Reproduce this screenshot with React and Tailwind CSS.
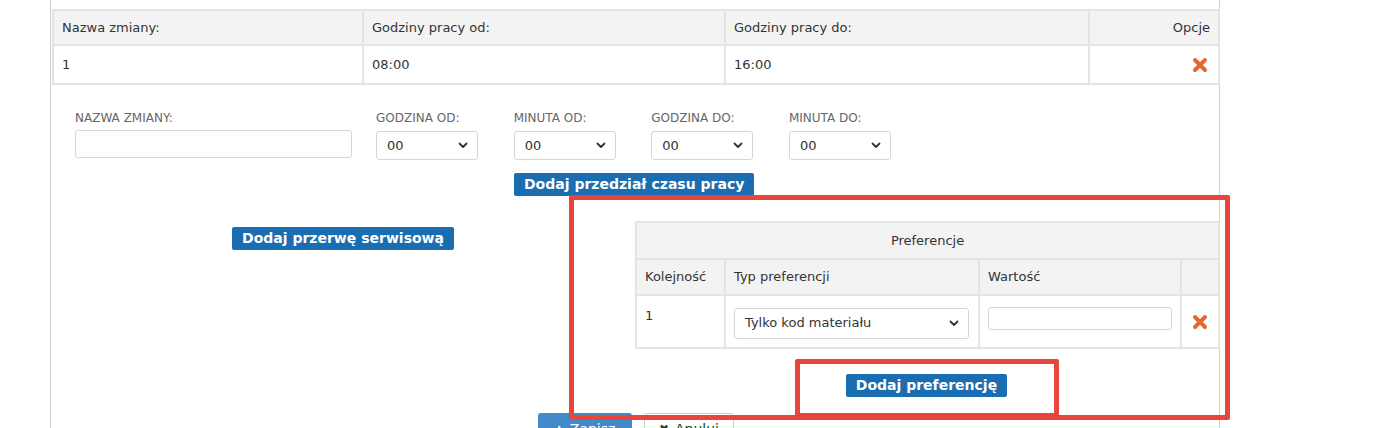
import React from "react";

const font = { fontFamily: '"DejaVu Sans", Verdana, sans-serif' };

function XIcon({ className = "" }) {
  return (
    <svg width="16" height="16" viewBox="0 0 16 16" className={className}>
      <path d="M3 3 L13 13 M13 3 L3 13" stroke="#e3692c" strokeWidth="4" strokeLinecap="round" />
    </svg>
  );
}

function Chevron() {
  return (
    <svg width="10" height="7" viewBox="0 0 10 7">
      <path d="M1.5 1.5 L5 5 L8.5 1.5" stroke="#333" strokeWidth="1.8" fill="none" strokeLinecap="round" strokeLinejoin="round" />
    </svg>
  );
}

function FakeSelect({ value, className = "" }) {
  return (
    <div className={`flex h-[29px] items-center justify-between rounded-[3px] border border-[#d6d6d6] bg-white pl-[10px] pr-[9px] text-[13px] text-[#333] ${className}`}>
      <span>{value}</span>
      <Chevron />
    </div>
  );
}

function BlueBtn({ children, className = "" }) {
  return (
    <button className={`h-[23px] rounded-[2px] bg-[#1a6db1] px-[10px] text-[14px] font-bold leading-[23px] text-white ${className}`}>
      {children}
    </button>
  );
}

export default function App() {
  const th = "border-2 border-[#e4e4e4] bg-[#f3f3f3] px-[8px] text-left font-normal";
  const td = "border-2 border-[#e4e4e4] bg-white px-[8px]";
  const selCols = [
    { label: "GODZINA OD:" },
    { label: "MINUTA OD:" },
    { label: "GODZINA DO:" },
    { label: "MINUTA DO:" },
  ];
  return (
    <div className="relative h-[428px] w-[1389px] overflow-hidden bg-white text-[13px] text-[#333]" style={font}>
      <div className="ml-[50px] h-[428px] w-[1170px] border-x border-[#cfcfcf] bg-white pt-[9px]">
        {/* top table */}
        <table className="ml-[1px] w-[1166px] table-fixed border-collapse">
          <colgroup>
            <col style={{ width: 310 }} />
            <col style={{ width: 362 }} />
            <col style={{ width: 364 }} />
            <col style={{ width: 130 }} />
          </colgroup>
          <thead>
            <tr className="h-[35px]">
              <th className={th}>Nazwa zmiany:</th>
              <th className={th}>Godziny pracy od:</th>
              <th className={th}>Godziny pracy do:</th>
              <th className={`${th} !text-right`}>Opcje</th>
            </tr>
          </thead>
          <tbody>
            <tr className="h-[39px]">
              <td className={td}>1</td>
              <td className={td}>08:00</td>
              <td className={td}>16:00</td>
              <td className={`${td} text-right`}>
                <span className="inline-flex pr-[2px] align-middle"><XIcon /></span>
              </td>
            </tr>
          </tbody>
        </table>

        {/* form row */}
        <div className="mt-[25px] flex pl-[24px]">
          <div className="w-[277px]">
            <div className="h-[16px] text-[12px] leading-[16px] text-[#666]">NAZWA ZMIANY:</div>
            <div className="mt-[4px] h-[28px] rounded-[3px] border border-[#d6d6d6] bg-white" />
          </div>
          <div className="ml-[24px] flex gap-[35.67px]">
            {selCols.map((c) => (
              <div key={c.label} className="w-[102px]">
                <div className="h-[16px] whitespace-nowrap text-[12px] leading-[16px] text-[#666]">{c.label}</div>
                <FakeSelect value="00" className="mt-[5px] !pl-[10px]" />
              </div>
            ))}
          </div>
        </div>

        <div className="mt-[13px] pl-[463px]">
          <BlueBtn>Dodaj przedział czasu pracy</BlueBtn>
        </div>

        {/* lower two-column section */}
        <div className="flex">
          <div className="flex w-[584px] justify-center pt-[31px]">
            <div><BlueBtn>Dodaj przerwę serwisową</BlueBtn></div>
          </div>
          <div className="w-[584px] pt-[25px]">
            <table className="w-[583px] table-fixed border-collapse">
              <colgroup>
                <col style={{ width: 89 }} />
                <col style={{ width: 254 }} />
                <col style={{ width: 202 }} />
                <col style={{ width: 38 }} />
              </colgroup>
              <thead>
                <tr className="h-[37px]">
                  <th colSpan={4} className={`${th} !text-center`}>Preferencje</th>
                </tr>
                <tr className="h-[36px]">
                  <th className={th}>Kolejność</th>
                  <th className={th}>Typ preferencji</th>
                  <th className={th}>Wartość</th>
                  <th className={th}></th>
                </tr>
              </thead>
              <tbody>
                <tr className="h-[53px]">
                  <td className={`${td} align-top pt-[10px]`}>1</td>
                  <td className={td}>
                    <FakeSelect value="Tylko kod materiału" className="h-[31px] w-[235px] !pl-[10px] mt-[3px]" />
                  </td>
                  <td className={td}>
                    <div className="mb-[6px] h-[23px] w-[184px] rounded-[3px] border border-[#d6d6d6] bg-white" />
                  </td>
                  <td className={`${td} text-center`}>
                    <span className="inline-flex align-middle"><XIcon /></span>
                  </td>
                </tr>
              </tbody>
            </table>
            <div className="mt-[25px] flex w-[583px] justify-center">
              <BlueBtn>Dodaj preferencję</BlueBtn>
            </div>
          </div>
        </div>

        {/* save / cancel */}
        <div className="mt-[16px] flex justify-center gap-[12px] pl-[2px]">
          <button className="flex h-[32px] w-[94px] items-center justify-center gap-[6px] rounded-[3px] bg-[#428bca] text-[14px] text-white">
            <span className="text-[12px]">▲</span>Zapisz
          </button>
          <button className="flex h-[32px] w-[90px] items-center justify-center gap-[6px] rounded-[3px] border border-[#ccc] bg-white text-[14px] text-[#333]">
            <span className="text-[12px]">✖</span>Anuluj
          </button>
        </div>
      </div>

      {/* annotation overlays */}
      <div className="pointer-events-none absolute left-[569px] top-[195px] h-[225px] w-[661px] rounded-[2px] border-[5px] border-[#e8463d]" />
      <div className="pointer-events-none absolute left-[795px] top-[359px] h-[59px] w-[264px] rounded-[2px] border-[5px] border-[#e8463d]" />
    </div>
  );
}
